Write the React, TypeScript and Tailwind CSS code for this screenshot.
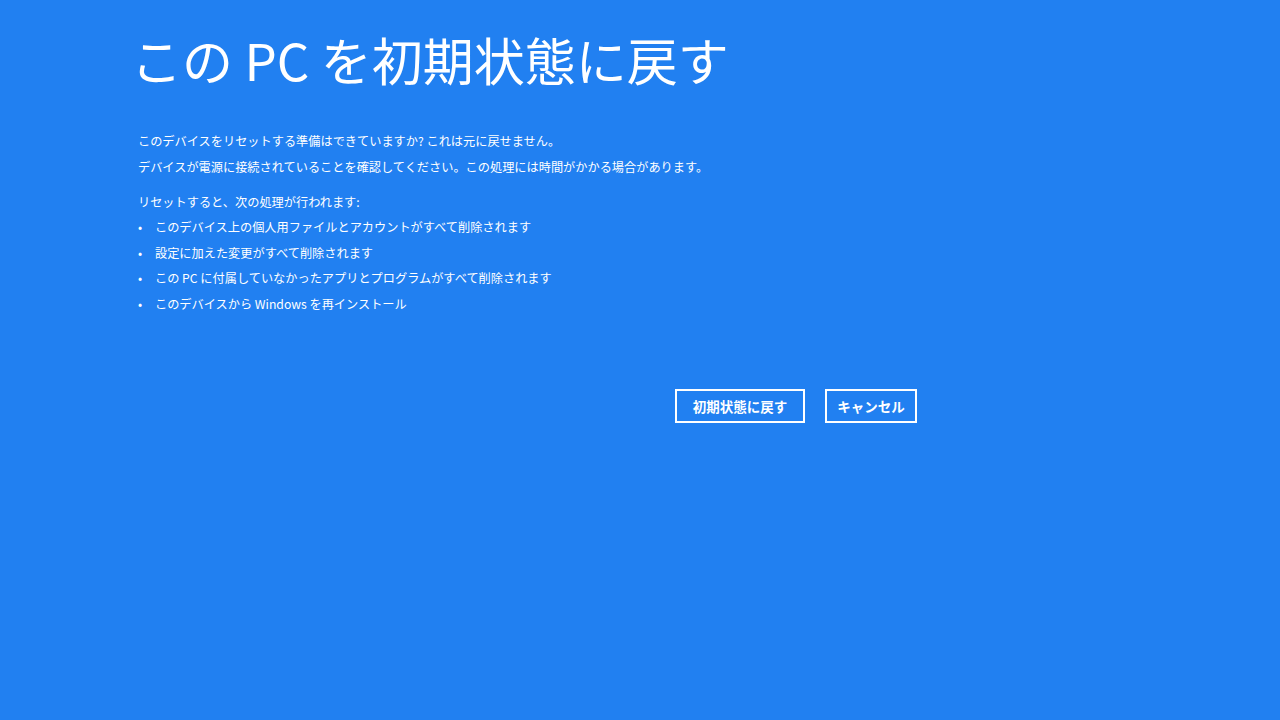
import React from "react";

const jp = { fontFamily: '"Noto Sans CJK JP", "Noto Sans", sans-serif' };

export default function App() {
  const bullets = [
    "このデバイス上の個人用ファイルとアカウントがすべて削除されます",
    "設定に加えた変更がすべて削除されます",
    "この PC に付属していなかったアプリとプログラムがすべて削除されます",
    "このデバイスから Windows を再インストール",
  ];
  return (
    <div className="w-[1280px] h-[720px] bg-[#2180f1] text-white overflow-hidden" style={jp}>
      <div className="pl-[131px] pt-[24px]">
        <h1 className="text-[51px] leading-[70px] font-normal">この PC を初期状態に戻す</h1>
        <div className="mt-[34px] pl-[7px] text-[12.2px] leading-[26px]">
          <p>このデバイスをリセットする準備はできていますか? これは元に戻せません。</p>
          <p>デバイスが電源に接続されていることを確認してください。この処理には時間がかかる場合があります。</p>
          <p className="mt-[9px]">リセットすると、次の処理が行われます:</p>
          <ul className="leading-[25.5px]">
            {bullets.map((b) => (
              <li key={b} className="flex">
                <span className="w-[17px]">•</span>
                <span>{b}</span>
              </li>
            ))}
          </ul>
        </div>
        <div className="flex gap-[20px] pl-[544px] mt-[72px]">
          <button className="w-[130px] h-[34px] border-2 border-white text-[13.5px] font-bold">初期状態に戻す</button>
          <button className="w-[92px] h-[34px] border-2 border-white text-[13.5px] font-bold">キャンセル</button>
        </div>
      </div>
    </div>
  );
}
